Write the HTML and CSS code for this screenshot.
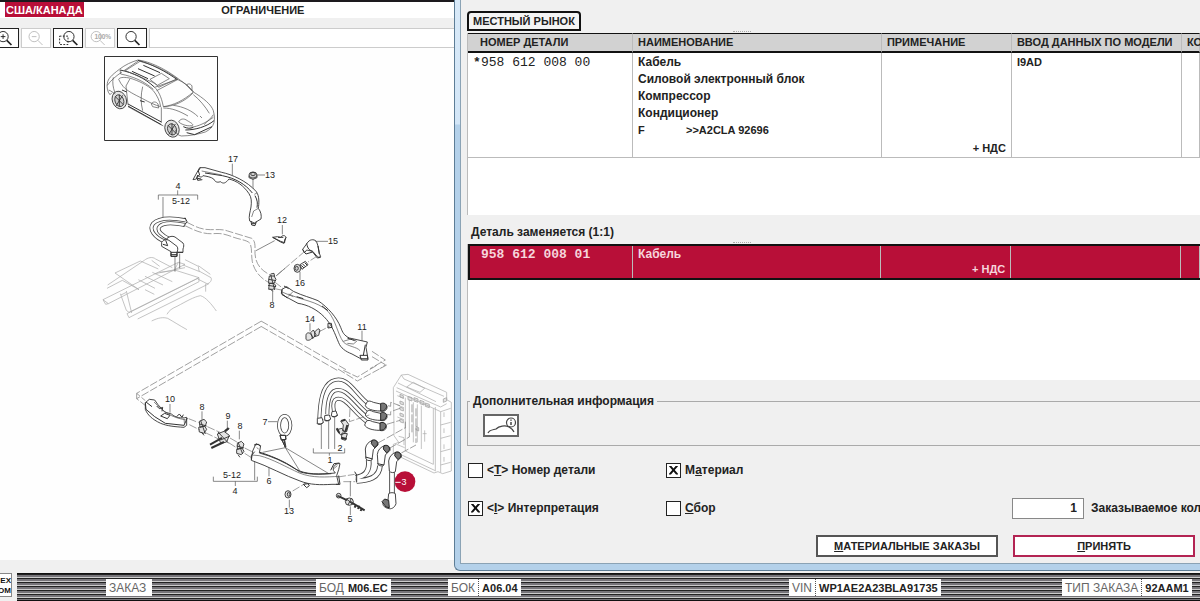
FILE: index.html
```html
<!DOCTYPE html>
<html lang="ru">
<head>
<meta charset="utf-8">
<title>Каталог деталей</title>
<meta name="viewport" content="width=device-width, initial-scale=1">
<link rel="stylesheet" href="styles.css">
</head>
<body>
<main class="workspace">
  <section class="viewer">
    <header class="viewer-head">
      <span class="market">США/КАНАДА</span>
      <span class="restriction">ОГРАНИЧЕНИЕ</span>
    </header>
    <div class="toolbar">
      <button class="tool" type="button" aria-label="Увеличить"><svg viewBox="0 0 30 18"><circle cx="14" cy="7.500" r="5.500"/><path d="M18 11.500l5 5" stroke-width="1.800"/><path d="M11.500 7.500h5M14 5v5"/></svg></button>
      <button class="tool" type="button" aria-label="Уменьшить" disabled><svg viewBox="0 0 30 18"><circle cx="13" cy="7.500" r="5.500"/><path d="M17 11.500l5 5M10.500 7.500h5"/></svg></button>
      <button class="tool" type="button" aria-label="Выделить область"><svg viewBox="0 0 30 18"><path d="M6 7h9v9H6z" stroke-dasharray="2 1.500"/><circle cx="16" cy="7.500" r="5.500"/><path d="M20 11.500l5 5" stroke-width="1.800"/></svg></button>
      <button class="tool" type="button" aria-label="Масштаб 100%" disabled><svg viewBox="0 0 30 18"><circle cx="11" cy="7.500" r="5.500"/><path d="M15 11.500l5 5"/><text x="9" y="10" class="tool-text">100%</text></svg></button>
      <button class="tool" type="button" aria-label="Поиск"><svg viewBox="0 0 30 18"><circle cx="14" cy="7.500" r="5.500"/><path d="M18 11.500l5 5" stroke-width="1.800"/></svg></button>
      <div class="tool-rest"></div>
    </div>
    <svg class="diagram" viewBox="0 48 454 512" role="img" aria-label="Схема деталей">
      <!-- vehicle -->
      <rect x="104.500" y="56.500" width="113" height="84" class="bold"/>
      <g transform="scale(.33333)">
        <path class="ink" d="M322 250c2-14 12-24 36-42 18-14 36-22 56-28 20 2 46 12 70 24 28 14 50 32 78 52 6 6 10 12 18 20 30 18 54 38 60 56 4 16 4 24 2 36-4 14-14 22-26 28-20 6-46 12-72 12-10-2-16-8-18-18M322 250c-2 10 0 26 8 34l6-6M384 320l106 58"/>
        <path class="bold" d="M360 210c40 8 74 24 104 52M414 181c44 12 84 34 118 58"/>
        <path class="ink" d="M360 210l2 12c38 8 68 20 98 46M372 212l44-30M376 212l80 34c10 4 18 12 20 16l56-26c-32-22-66-40-112-52zM464 262c10 10 20 26 26 58 30-4 60-18 90-44-10-14-26-28-48-38zM450 238l34-18 24 16-36 20zM470 272l64-34M490 320c30 0 66-16 90-42M356 238c4-8 22-6 32-4 28 8 56 22 72 38 10 12 20 32 22 48-16-4-36-14-54-24-24-12-48-24-58-36-6-6-10-14-14-22zM390 236l-12 22 6 56M428 260c-6 24-6 50 0 72M484 322v46M326 270c10 4 16 10 20 12M340 232c-4 16 0 32 4 44M490 324c26 0 50 10 74 24M580 284c18 14 36 36 48 56M536 366c4-10 16-12 26-4 10 6 18 10 16 14-10 4-30 0-42-10zM572 382c22-2 46-14 68-30M640 344c-4 8-20 22-28 30M322 256c10-14 28-30 44-40M600 348l6 6M454 312c4-8 14-8 20 0l2 12-18-4zM560 256c2-6 12-6 16 2v14zM520 316c30 4 56 16 74 34"/>
        <path class="bold" d="M396 214l48 22M414 206l50 22M430 196l50 22M384 318l100 56M384 312l100 54M366 270l14 6M420 302l14 4M556 390c30 0 64-10 86-28M550 380c12 6 22 6 30 2M560 398l24 6 52-24"/>
        <g class="tyre"><ellipse cx="358" cy="300" rx="21" ry="27" transform="rotate(-20 358 300)"/><ellipse cx="358" cy="302" rx="13" ry="18" transform="rotate(-20 358 302)"/><ellipse cx="516" cy="386" rx="21" ry="26" transform="rotate(-20 516 386)"/><ellipse cx="516" cy="388" rx="13" ry="17" transform="rotate(-20 516 388)"/><path d="M346 290l24 24M368 286l-20 32M504 376l24 24M526 372l-20 32M358 284v36M516 370v36"/></g>
      </g>
      <!-- rear frame, cable loop and bracket 17 -->
      <g transform="translate(95 145) scale(.33333)">
        <path class="faint" d="M24 464l226-112 20 6-230 118zM24 464l8 14 8-2M36 430l46-24M38 420l110-74c10-8 24-12 34-4l50 26M60 384l76-36 54 24M82 406l50 28M60 384l72 50M76 446l18 50 8 6 210-104M94 438l16 66M78 450l16-8M96 506l216-108-70-22-48 6M96 506l6 12 210-108v-12M128 522l214-106M130 404l50 26M150 394l54 26M172 382l60 28M150 434l28 14M170 346l24 18M180 386l90-18M238 376l12-24M270 344l40 20 2 14 36 20c4 8-4 18-12 18l-28-14M310 362l36 26M332 416v24M216 508c6-12 16-18 30-24 30-16 50-28 70-32 16 4 34 26 48 46M170 528c20-10 34-12 48-8 18 10 36 22 58 34M264 360l50 20"/>
        <path class="ink" d="M190 164v-14h118v14M248 136v14M204 156v62M412 56v34M484 90h26M474 100v116M562 240v28M544 392l26-22M240 334v46M254 326v44"/>
        <path class="cable" d="M272 226c-40-8-80-8-98 10-14 18 6 42 36 54"/><path class="cable-in" d="M272 226c-40-8-80-8-98 10-14 18 6 42 36 54"/>
        <path class="cable" d="M270 240c-40-8-66-6-76 4-12 12 10 30 30 38"/><path class="cable-in" d="M270 240c-40-8-66-6-76 4-12 12 10 30 30 38"/>
        <path class="part" d="M216 280c8-6 16-8 24-4l24 18c4 6 2 12 0 18v10h-18v-14l-30-14z"/>
        <path class="part" d="M200 292c6-8 14-10 22-6l24 18c4 6 2 12 0 18v12h-18v-14l-28-16z"/>
        <path class="bold" d="M228 322h18v12h-18zM228 329h18M248 322h16M270 218l6 12-10 14M204 298l14 4M212 286l6 16"/>
        <path class="dash" d="M276 232c20 10 40 22 70 22 20 0 36-2 52 4l72 22c12 8 10 24 10 46 2 30 16 50 50 66M270 242c28 14 54 26 84 24 26-2 36 2 54 8 24 10 46 10 56 20 8 12 4 34 8 56 6 28 24 50 52 64"/>
        <path class="part" d="M314 68l16 0 50 14c30 6 76 26 104 58 10 14 8 36 6 50 8 10 10 22 8 32l-20 12-14-6c-4-14 2-28 4-42 2-16 2-28-6-40-16-24-36-38-60-44-10 12-16 16-26 8-10 4-16 0-20-8-8-6-20-8-32-10-4 8-14 2-16-2l-4 12-10 2z"/>
        <path class="bold" d="M316 68l-6 10 4 12-8 6 2 10 14-2M308 100l10 2M468 228l2 12 10 2 4-12M470 236h12M330 84l52 8c40 8 70 26 90 52M480 152c8 14 8 24 6 36"/>
        <path class="ink" d="M320 78l60 12M478 148l8-4M470 216l6-18 14-8"/>
        <g class="tyre"><ellipse cx="474" cy="90" rx="12" ry="9"/><ellipse cx="474" cy="87" rx="7" ry="5"/><path d="M462 92v6l12 5 12-5v-6"/></g>
      </g>
      <!-- clips 12, 15, 16, 14 and channel 11 -->
      <g transform="translate(240 200) scale(.33333)">
        <path class="part" d="M98 112l14-2 10 2c6-8 14-6 16 0l-4 8v8l-12-4z"/><path class="bold" d="M98 112l24 14 10 4 6-18M114 112h16"/>
        <path class="part" d="M188 148l16-22c8-10 22-8 26 0l4 12 4 22 4 10-8 2-16-18-18-4-6 8z"/><path class="bold" d="M188 148l4 8 6 6 20-6 14 18 10-2M234 138l4 24M200 130c2 10 4 20 18 24"/>
        <path class="part" d="M180 194l16-10 8 10-18 14z"/><path class="bold" d="M184 196l8 8M188 192l8 8M194 188l8 8"/><g class="tyre"><ellipse cx="172" cy="205" rx="10" ry="12"/><ellipse cx="170" cy="205" rx="5" ry="6"/></g>
        <path class="ink" d="M226 124h38M180 216v24M98 270v36M210 370v24M366 392v36M48 152l56-30"/>
        <path class="dash" d="M108 228l84-72M104 246l26 20M104 266l20 4M232 168l-28 18M236 396l34-18"/>
        <g class="tyre"><path d="M88 228h14l6 10-6 12h-16v-10zM88 250h14l6 8-8 10h-14zM92 224l12 46M86 238l22 4M84 256l24 4M92 222l10-2 2 10M90 266l8 8"/></g>
        <path class="part" d="M126 268l14-8 20 14c30 14 50 18 74 28 30 20 56 50 68 80 6 16 10 24 26 32l54 12-4 16 6 34-22 0-26-14c-20-8-34-18-40-34-12-28-20-54-44-78-22-22-50-36-78-40l-48-26z"/>
        <path class="ink" d="M146 282c40 20 84 20 118 52 24 28 28 66 46 92 14 14 40 14 50 26M158 276l-14 14M126 276l34 14M310 424l26-8 14 8-10 8-18-2"/>
        <path class="bold" d="M132 258l14 8M126 268l-2 12 18 14M170 290l20 6M246 318l18 14M322 414l22 8M360 466l22 0 2 14-20 0zM376 434l-6 32M264 370l10 0 2 12-12 2z"/>
        <path class="tyre" d="M224 396l10-10 6 4-4 16-12 4zM212 398l8-8 8 14-10 12zM198 406c0-8 10-10 14-4l6 8c-2 10-16 14-20 8z"/>
        <path class="dash" d="M63 363l255 146M63 379l232 134M396 454l40 26-46 26M396 470l40 24-16 12"/>
      </g>
      <!-- outline, channel 10, clips 8 and 9 -->
      <g transform="translate(130 310) scale(.33333)">
        <path class="dash" d="M393 34L20 250l26 22M393 50L20 266M20 250v16l28 22M176 326l30 12M178 344l32 16M232 350l40 18M226 368l46 22M300 384l24 14M296 398l28 18M344 414l24 12M344 430l22 14"/>
        <path class="part" d="M46 278l12-10 16 2 10 14 20 22 20 6c14 12 30 14 46 10v24l-8 6c-30-2-50-4-70-12-26-12-40-26-46-42z"/>
        <path class="bold" d="M46 278l2 20 26 22 32 20 56 6 10-22M80 288l8 8 10-4-2 12M140 320l8-8 8 10 4-8M48 276l18 14M92 318l12-8 16 6-8 10z"/>
        <path class="ink" d="M72 276c30 30 50 46 96 54M162 326l2 20M120 282v26M216 304v26M292 332v22M328 362v26M250 500v14h132v-14M316 514v14"/>
        <g class="tyre"><path d="M208 334l14-6 8 8-4 12-16 4zM206 352l18-4 6 10-8 12-14-4zM214 366l8 10M212 332l14 40M208 342l22 6M322 400l12-6 8 8-4 12-16 4zM320 418l16-4 6 10-8 10-14-4zM324 434l6 8M324 396l14 36M320 408l22 6M262 372l20-8 16 12-8 20-18 4zM264 366l32 34M286 366l12-10M272 390l28-12"/></g>
        <path class="thick" d="M276 384l-36 20M282 396l-38 18M284 364l12-10"/>
        <ellipse class="cable" cx="464" cy="346" rx="17" ry="28"/><ellipse class="cable-in" cx="464" cy="346" rx="17" ry="28"/>
        <path class="part" d="M450 376h16l2 12-14 2zM456 390l10 22 2 0-4-22z"/><path class="bold" d="M450 376h16l2 12-14 2zM456 390l10 22-4-24"/>
      </g>
      <!-- cable set 1, channel 6, cable 3 and connector housing -->
      <g transform="translate(250 365) scale(.33333)">
        <g class="faint">
          <path d="M430 68l24-38 20-2 116 54v22l14 8v206l-26 8-14-6-12 4-122-58v-28l16-6-14-20v-28zM438 78l134 62v182M440 68l132 58 18-10M444 54l114 56M454 30l8 12 120 52M572 140l30-10M572 180l30-8M572 220l30-8M572 260l30-8M572 300l30-8M470 66l20-14 34 18-14 12zM556 126v190M466 98v160l84 40V130M440 238l24 10M438 262l120 56M478 104v100M490 112v120M502 118v114M514 122v130M524 196v34M518 206h12M582 142v14M582 190v14M582 238v14M582 276v14M442 92l20 8M442 120l20 8M442 156l20 8M446 214l16 4v22"/>
        </g>
        <g class="tyre pale"><path d="M450 88l10 4v8l-10-4zM450 108l10 4v8l-10-4zM450 126l10 4v8l-10-4zM450 144l10 4v8l-10-4zM450 162l10 4v8l-10-4zM474 94l12 4v10l-12-4zM492 98l12 4v10l-12-4zM510 106l12 4v10l-12-4zM526 114l12 4v10l-12-4zM498 184l8 4v10l-8-4zM580 102l10-4v10l-10 4z"/></g>
        <path class="cable" d="M208 160c2-50 8-96 38-112 50-22 70 42 112 70"/><path class="cable-in" d="M208 160c2-50 8-96 38-112 50-22 70 42 112 70"/>
        <path class="cable" d="M232 148c0-28 2-58 20-70 36-16 60 36 104 70"/><path class="cable-in" d="M232 148c0-28 2-58 20-70 36-16 60 36 104 70"/>
        <path class="cable" d="M252 140c-4-20-4-34 8-38 30-8 50 44 98 74"/><path class="cable-in" d="M252 140c-4-20-4-34 8-38 30-8 50 44 98 74"/>
        <g id="plug"><path class="part" d="M350 112c6-6 12-4 20 0l26 6c12-4 18 6 14 14-4 8-12 8-20 6-20 0-40-6-44-16z"/><path class="dark" d="M392 116c8-4 18 0 18 8-2 12-10 14-18 14z"/></g>
        <use href="#plug" y="28"/><use href="#plug" x="-2" y="58"/>
        <path class="part" d="M202 160l14-2 4 14c-4 6-14 6-18 2zM224 152l14-2 4 12c-4 6-14 6-18 2zM246 140l12-2 4 12c-4 6-14 6-18 2z"/><path class="bold" d="M200 174c4 6 14 6 20-2M222 164c4 6 14 4 20-2M244 152c4 6 14 4 20-2"/>
        <path class="ink" d="M214 178v74M236 166v86M254 154v98M190 250v14h94v-14M238 264v8M82 170h-28M57 306v28M301 424v26M301 348v46M436 352h20M118 404v24M14 284v62M106 248L38 262M106 248l46 74M106 248l134 80"/>
        <path class="dash" d="M414 122l8 2 0-12 28 10M410 148l12 2v-10l28-10M410 178l40-12M384 234l82-46M418 250l60-34M454 264l44-24M300 132l-2 38 60-20M264 336l50-8M280 350h36M128 378l40-24M478 204v12M280 16l42 20 60-36M264 12l58 36 88-48"/>
        <path class="tyre" d="M272 168l14-4 10 14-6 22-12-2 2-18zM260 194l16-4 10 14-14 6zM276 204l16 2-6 20-12-4z"/><path class="thick" d="M274 168l12-4M260 190l8 14M274 218l16 4M292 180l-6 20"/>
        <path class="part" d="M8 258l10-22 14 6-4 22c38 10 74 26 108 48 32 18 74 16 120 12l-6-8c-2-12 8-22 20-20l-4 18-6 18 6 26h-20c-34 2-66 2-96-10-46-16-94-44-146-62z"/>
        <path class="bold" d="M4 284l0-12 10-12M12 240l14-2 4 6M30 262c50 16 86 34 118 58 34 10 60 8 96 6M242 316l10-20 16-2M266 332l4 26h-12M160 358l14-2 4 6-8 6z"/><path class="ink" d="M4 270l24 2c40 10 80 34 120 52 40 16 80 12 120 10M20 248l6 4M250 312l12-10"/>
        <path class="cable wide" d="M316 338c28-4 44-16 40-54M320 348c34-2 68-8 70-46M426 310v80"/><path class="cable-in wide-in" d="M316 338c28-4 44-16 40-54M320 348c34-2 68-8 70-46M426 310v80"/>
        <g id="elbow"><path class="part" d="M348 282l-2-30c2-14 10-22 22-26 10-2 18 4 16 14l-14 14-4 30c-4 4-14 4-18-2z"/><path class="dark" d="M366 226c12-4 18 4 16 14l-8 8-10-12z"/></g>
        <use href="#elbow" x="36" y="16"/><use href="#elbow" x="70" y="36"/>
        <path class="part" d="M416 386c4-4 16-4 20 0l2 30c-4 12-14 18-24 14-12-2-20-12-12-22l12-2z"/><path class="dark" d="M396 410l8-8 12 4 2 22-10-2z"/>
        <path class="bold" d="M314 320l6 10v22M346 276l22 6M382 296l20 4"/>
        <path class="thick" d="M262 392l30 14M300 410l44 26M318 418l-4 10M328 422l-4 10M336 428l-4 10"/>
        <g class="tyre"><circle cx="266" cy="392" r="7"/><ellipse cx="298" cy="410" rx="12" ry="11"/><path d="M290 402l18 16M304 400l-10 20"/><ellipse cx="114" cy="388" rx="9" ry="11"/><ellipse cx="116" cy="388" rx="4" ry="6"/></g>
        <path class="dash" d="M498 130v104M486 118v90M466 170v20"/>
        <circle class="hot" cx="465" cy="350" r="31"/><path class="hot-line" d="M436 352h16"/>
      </g>
      <g class="labels">
        <text x="233" y="162">17</text><text x="270" y="178">13</text><text x="178" y="189">4</text><text x="181" y="204">5-12</text>
        <text x="282" y="223">12</text><text x="333" y="244">15</text><text x="300" y="286">16</text><text x="272" y="308">8</text>
        <text x="310" y="322">14</text><text x="362" y="330">11</text><text x="170" y="402">10</text><text x="202" y="410">8</text>
        <text x="228" y="419">9</text><text x="240" y="429">8</text><text x="265" y="425">7</text><text x="340" y="451">2</text>
        <text x="330" y="463">1</text><text x="232" y="478">5-12</text><text x="235" y="494">4</text><text x="269" y="484">6</text>
        <text x="289" y="514">13</text><text x="350" y="522">5</text><text x="404" y="485" class="hot-text">3</text>
      </g>
    </svg>
  </section>

  <section class="dialog">
    <div class="dialog-body">
      <div class="tabs"><button class="tab" type="button">МЕСТНЫЙ РЫНОК</button></div>
      <div class="grip"></div>
      <div class="list list-main">
        <table class="parts">
          <colgroup><col class="c-num"><col class="c-name"><col class="c-note"><col class="c-model"><col></colgroup>
          <thead><tr><th class="first">НОМЕР ДЕТАЛИ</th><th>НАИМЕНОВАНИЕ</th><th>ПРИМЕЧАНИЕ</th><th>ВВОД ДАННЫХ ПО МОДЕЛИ</th><th>КО</th></tr></thead>
          <tbody><tr>
            <td class="num"><span class="star">*</span>958 612 008 00</td>
            <td>Кабель<br>Силовой электронный блок<br>Компрессор<br>Кондиционер<br><span class="code"><span>F</span><span>&gt;&gt;A2CLA 92696</span></span></td>
            <td class="vat">+ НДС</td><td class="model">I9AD</td><td></td>
          </tr></tbody>
        </table>
      </div>
      <h2 class="replace">Деталь заменяется (1:1)</h2>
      <div class="grip"></div>
      <div class="list list-alt">
        <table class="parts selected">
          <colgroup><col class="c-num"><col class="c-name"><col class="c-note"><col class="c-model"><col></colgroup>
          <tbody><tr><td class="num"><span class="star"></span>958 612 008 01</td><td>Кабель</td><td class="vat">+ НДС</td><td></td><td></td></tr></tbody>
        </table>
      </div>
      <fieldset class="extra">
        <legend>Дополнительная информация</legend>
        <button class="car-info" type="button" aria-label="Информация об автомобиле"><svg viewBox="0 0 32 18"><path d="M3 16c1-3 4-3 8-4 3-3 9-4 13-2 2 1 4 3 5 5"/><circle cx="26" cy="5.500" r="4.500"/><path d="M26 5v3M26 2.500v1.200" stroke-width="1.500"/></svg></button>
      </fieldset>
      <form class="options">
        <label class="check"><input type="checkbox"><span>&lt;<u>T</u>&gt; Номер детали</span></label>
        <label class="check"><input type="checkbox" checked><span>М<u>а</u>териал</span></label>
        <span></span>
        <label class="check"><input type="checkbox" checked><span>&lt;<u>I</u>&gt; Интерпретация</span></label>
        <label class="check"><input type="checkbox"><span><u>С</u>бор</span></label>
        <label class="qty"><input type="text" value="1"><span>Заказываемое кол</span></label>
      </form>
      <div class="actions">
        <button class="action" type="button"><span><u>М</u>АТЕРИАЛЬНЫЕ ЗАКАЗЫ</span></button>
        <button class="action primary" type="button"><span><u>П</u>РИНЯТЬ</span></button>
      </div>
    </div>
  </section>
</main>
<footer class="status">
  <div class="logo"><span>EX</span><span>OM</span></div>
  <dl class="fields">
    <div class="field order"><dt>ЗАКАЗ</dt></div>
    <div class="field"><dt>БОД</dt><dd>M06.EC</dd></div>
    <div class="field split"><dt>БОК</dt><dd>A06.04</dd></div>
    <div class="field split"><dt>VIN</dt><dd>WP1AE2A23BLA91735</dd></div>
    <div class="field split"><dt>ТИП ЗАКАЗА</dt><dd>92AAM1</dd></div>
  </dl>
</footer>
</body>
</html>
```
FILE: styles.css
```css
* { box-sizing: border-box; }
body {
  margin: 0;
  min-height: 100vh;
  display: flex;
  flex-direction: column;
  overflow-x: hidden;
  background: #f0f0f0;
  color: #222;
  font: bold 12px/17px "Liberation Sans", Arial, sans-serif;
}
button, input { font: inherit; color: inherit; }

.workspace { flex: 1; display: grid; grid-template-columns: 454fr 746fr; padding-bottom: 2px; }

/* drawing pane */
.viewer { min-width: 0; border-top: 2px solid #1d1a1e; }
.viewer-head { display: flex; height: 16px; padding-left: 5px; background: #fff; font-size: 11px; }
.market { height: 15px; padding: 0 1px; line-height: 16px; background: #b80f38; color: #fff; }
.restriction { margin: 0 auto; padding-right: 12px; line-height: 16px; }
.toolbar { display: flex; gap: 2px; height: 30px; padding-top: 10px; overflow: hidden; }
.tool { flex: none; width: 30px; height: 20px; padding: 0; border: 1px solid #222; background: #fff; }
.tool:first-child { margin-left: -11px; }
.tool svg { display: block; width: 28px; height: 18px; fill: none; stroke: #222; stroke-width: 1; }
.tool:disabled { border-color: #ccc; }
.tool:disabled svg { stroke: #bbb; }
.tool .tool-text { fill: #aaa; stroke: none; font: bold 7px "Liberation Sans", sans-serif; }
.tool-rest { flex: 1; border: 1px solid #ccc; border-right: 0; background: #fff; }
.diagram { display: block; width: 100%; background: #fefefe; }
.diagram path, .diagram ellipse, .diagram circle, .diagram rect { fill: none; vector-effect: non-scaling-stroke; }
.diagram .ink { stroke: #555; stroke-width: .7; }
.diagram .bold { stroke: #333; stroke-width: 1; }
.diagram .thick { stroke: #333; stroke-width: 2; }
.diagram .faint, .diagram .faint path { stroke: #aaa; stroke-width: .7; }
.diagram .dash { stroke: #777; stroke-width: .7; stroke-dasharray: 8 2; }
.diagram .part { fill: #fff; stroke: #333; stroke-width: .9; }
.diagram .dark { fill: #777; stroke: #222; stroke-width: 1; }
.diagram .tyre, .diagram .tyre path, .diagram .tyre ellipse, .diagram .tyre circle { fill: #9994; stroke: #333; stroke-width: .9; }
.diagram .tyre.pale path { stroke: #aaa; }
.diagram .cable { stroke: #444; stroke-width: 4; }
.diagram .cable-in { stroke: #fff; stroke-width: 2.4; }
.diagram .wide { stroke-width: 5.6; }
.diagram .wide-in { stroke-width: 3.8; }
.diagram .hot { fill: #b80f38; }
.diagram .hot-line { stroke: #fff; stroke-width: 1; }
.labels { font: 9px "Liberation Sans", sans-serif; fill: #222; text-anchor: middle; }
.labels .hot-text { fill: #fff; }

/* part window */
.dialog {
  min-width: 0;
  display: flex;
  padding: 0 0 6px 5px;
  border: 1px solid #5d7d96;
  border-width: 0 0 1px 1px;
  border-radius: 0 0 0 6px;
  background: linear-gradient(#d8e9f8 0, #d3e6f7 124px, #b4d1ea 125px);
}
.dialog-body {
  flex: 1;
  min-width: 0;
  display: flex;
  flex-direction: column;
  padding: 11px 0 6px 6px;
  border: 1px solid #8ba3b5;
  border-width: 0 0 1px 1px;
  background: #f0f0f0;
}
.tab { display: block; height: 20px; padding: 0 4px; border: 2px solid #111; border-radius: 4px 4px 0 0; background: #f4f4f4; font-size: 11px; line-height: 16px; }
.grip { width: 18px; height: 2px; margin-left: 266px; border-top: 1px dotted #aaa; }
.list { background: #fff; border-left: 1px solid #bbb; overflow: hidden; }
.list-main { height: 182px; }
.list-alt { height: 136px; }
.parts { width: 100%; table-layout: fixed; border-collapse: separate; border-spacing: 0; }
.c-num { width: 165px; }
.c-name { width: 34%; }
.c-note { width: 130px; }
.c-model { width: 170px; }
.parts th { height: 20px; padding: 0 0 0 5px; border-top: 1px solid #111; border-bottom: 2px solid #111; border-right: 1px solid #bbb; background: #d2d2d2; text-align: left; white-space: nowrap; font-size: 11px; line-height: 17px; }
.parts th.first { padding-left: 12px; }
.parts td { height: 105px; padding: 1px 5px 0; border-right: 1px solid #bbb; border-bottom: 1px solid #bbb; vertical-align: top; white-space: nowrap; }
.parts .num { padding-left: 5px; font: 13px/17px "Liberation Mono", monospace; }
.star { display: inline-block; width: 8px; font-weight: bold; }
.parts .vat { vertical-align: bottom; text-align: right; font-size: 11px; }
.parts .model { font-size: 11px; }
.code { display: inline-grid; grid-template-columns: 48px auto; font-size: 11px; }
.replace { height: 27px; margin: 0; padding: 9px 0 0 4px; font-size: 12px; line-height: 17px; }
.selected { border: 2px solid #111; border-width: 2px 0 2px 2px; background: #b80f38; color: #f6d5dc; }
.selected .c-num { width: 163px; }
.selected td { height: 32px; padding-top: 0; border-bottom: 0; }
.selected .num { padding-left: 3px; font-weight: bold; }

.extra { height: 53px; margin: 13px -4px 0 0; padding: 4px 15px; border: 1px solid #aaa; line-height: 17px; min-width: 0; }
.extra legend { padding: 0 3px; margin-left: -13px; line-height: 17px; }
.car-info { display: block; width: 36px; height: 23px; padding: 0; border: 2px solid #666; background: #fff; }
.car-info svg { display: block; width: 32px; height: 18px; fill: none; stroke: #444; stroke-width: 1.200; }

.options { display: grid; grid-template-columns: 198px 347px 1fr; grid-template-rows: 38px 38px; align-items: center; margin-top: 5px; white-space: nowrap; overflow: hidden; }
.check { display: flex; align-items: center; gap: 4px; }
.check input { appearance: none; display: grid; place-items: center; flex: none; width: 15px; height: 15px; margin: 0 0 0 1px; border: 1px solid #222; background: #fff; }
.check input:checked::before {
  content: "";
  width: 9px;
  height: 9px;
  background: #111;
  clip-path: polygon(0 0, 22% 0, 50% 34%, 78% 0, 100% 0, 100% 8%, 64% 50%, 100% 92%, 100% 100%, 78% 100%, 50% 66%, 22% 100%, 0 100%, 0 92%, 36% 50%, 0 8%);
}
.qty { display: flex; align-items: center; gap: 7px; }
.qty input { flex: none; width: 72px; height: 21px; padding: 0 6px; border: 1px solid #888; background: #fff; text-align: right; }

.actions { display: flex; justify-content: flex-end; gap: 15px; margin-top: auto; padding-right: 5px; }
.action { width: 182px; height: 22px; padding: 0; border: 2px solid #555; background: #fff; font-size: 11px; line-height: 18px; }
.action.primary { border-color: #b32453; }

/* status bar */
.status { display: flex; gap: 5px; height: 28px; overflow: hidden; }
.logo { display: flex; flex-direction: column; align-items: flex-end; flex: none; width: 12px; height: 24px; padding-top: 2px; overflow: hidden; border: 1px solid #888; border-left: 0; background: #fff; color: #111; font-size: 8px; line-height: 10px; }
.fields {
  flex: 1;
  display: grid;
  grid-template-columns: 89fr 210fr 132fr 341fr 273fr 138fr;
  align-items: center;
  margin: 0;
  border: 1px solid #111;
  border-width: 1px 0;
  background: repeating-linear-gradient(#222 0 1px, #77757a 1px 3px, #ccc 3px 4px);
}
.field { display: flex; justify-self: start; height: 17px; padding: 0 3px; background: #fff; line-height: 18px; white-space: nowrap; }
.field.order { grid-column: 2; padding-right: 6px; }
.field dt { font-weight: normal; color: #666; }
.field dd { margin: 0 0 0 4px; font-size: 11px; }
.split dd { margin-left: 3px; padding-left: 3px; border-left: 1px dotted #555; }
```
